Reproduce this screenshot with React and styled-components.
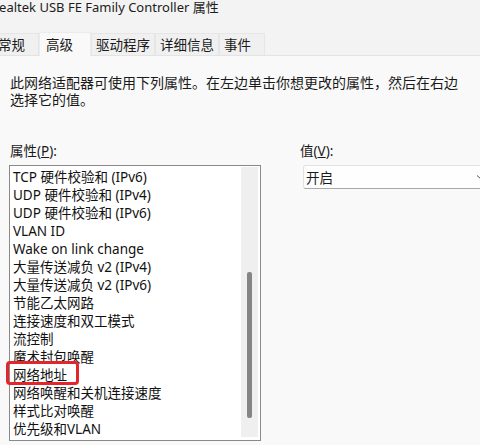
import React from "react";
import styled, { createGlobalStyle } from "styled-components";

const GlobalStyle = createGlobalStyle`
  html, body {
    margin: 0;
    padding: 0;
    background: #f9f9f9;
    overflow: hidden;
  }
  body {
    font-family: "Noto Sans", "Noto Sans CJK SC", sans-serif;
    font-size: 14px;
    color: #1a1a1a;
  }
`;

const properties = [
  "TCP 硬件校验和 (IPv6)",
  "UDP 硬件校验和 (IPv4)",
  "UDP 硬件校验和 (IPv6)",
  "VLAN ID",
  "Wake on link change",
  "大量传送减负 v2 (IPv4)",
  "大量传送减负 v2 (IPv6)",
  "节能乙太网路",
  "连接速度和双工模式",
  "流控制",
  "魔术封包唤醒",
  "网络地址",
  "网络唤醒和关机连接速度",
  "样式比对唤醒",
  "优先级和VLAN",
];

const tabs = ["常规", "高级", "驱动程序", "详细信息", "事件"];

const App = () => {
  return (
    <Wrapper>
      <GlobalStyle />
      <TitleBar>Realtek USB FE Family Controller 属性</TitleBar>
      <TabStrip>
        {tabs.map((t) => (
          <Tab key={t} $active={t === "高级"}>
            {t}
          </Tab>
        ))}
      </TabStrip>
      <Panel>
        <Description>
          此网络适配器可使用下列属性。在左边单击你想更改的属性，然后在右边
          <br />
          选择它的值。
        </Description>
        <Columns>
          <Column>
            <Label>
              属性(<u>P</u>):
            </Label>
            <ListBox>
              <Items>
                {properties.map((p) => (
                  <Item key={p} $marked={p === "网络地址"}>
                    {p}
                  </Item>
                ))}
              </Items>
              <Track>
                <Thumb />
              </Track>
            </ListBox>
          </Column>
          <Column $right>
            <Label>
              值(<u>V</u>):
            </Label>
            <Select>
              <span>开启</span>
              <svg width="10" height="10" viewBox="0 0 10 10">
                <path d="M1 3.5 L5 7 L9 3.5" fill="none" stroke="#555" strokeWidth="1" />
              </svg>
            </Select>
          </Column>
        </Columns>
      </Panel>
    </Wrapper>
  );
};

export default App;

const Wrapper = styled.div`
  width: 520px;
  margin-left: -10px;
`;

const TitleBar = styled.div`
  height: 18px;
  line-height: 15px;
  padding-left: 1px;
  font-size: 13px;
  background: #f3f3f3;
  white-space: nowrap;
  color: #1c1c1c;
`;

const TabStrip = styled.div`
  display: flex;
  align-items: flex-end;
  height: 37px;
  padding-left: 3px;
  background: #f3f3f3;
  border-bottom: 1px solid #e3e3e3;
`;

const Tab = styled.div`
  box-sizing: border-box;
  min-width: ${(p) => (p.$active ? "52px" : "46px")};
  height: ${(p) => (p.$active ? "24px" : "22px")};
  line-height: ${(p) => (p.$active ? "24px" : "22px")};
  padding: ${(p) => (p.$active ? "0 8px 0 6px" : "0 4px")};
  margin-bottom: ${(p) => (p.$active ? "-1px" : "0")};
  font-size: 13.5px;
  background: ${(p) => (p.$active ? "#f9f9f9" : "#f0f0f0")};
  border: 1px solid ${(p) => (p.$active ? "#ebebeb" : "#e6e6e6")};
  border-bottom: none;
  white-space: nowrap;
`;

const Panel = styled.div`
  padding: 19px 0 0 20px;
`;

const Description = styled.p`
  margin: 0;
  line-height: 16.5px;
  white-space: nowrap;
`;

const Columns = styled.div`
  display: flex;
  gap: 39px;
  margin-top: 34px;
`;

const Column = styled.div`
  display: flex;
  flex-direction: column;
  gap: 5px;
  ${(p) => (p.$right ? "flex: 1;" : "")}
`;

const Label = styled.div`
  line-height: 18px;
  font-size: 13.5px;
`;

const ListBox = styled.div`
  display: flex;
  width: 250px;
  height: 274px;
  margin-left: -1px;
  background: #ffffff;
  border: 1px solid #8a8a8a;
`;

const Items = styled.div`
  flex: 1;
  padding: 2px 0 0 3px;
`;

const Item = styled.div`
  position: relative;
  height: 18px;
  line-height: 18px;
  font-size: 13.5px;
  white-space: nowrap;
  color: #111;

  ${(p) =>
    p.$marked &&
    `
    &::after {
      content: "";
      position: absolute;
      left: -7px;
      top: -5px;
      width: 67px;
      height: 18px;
      border: 3px solid #e3262b;
      border-radius: 4px;
    }
  `}
`;

const Track = styled.div`
  display: flex;
  flex-direction: column;
  justify-content: flex-end;
  width: 17px;
  margin: 1px 2px 3px 0;
  padding-bottom: 19px;
  background: #efefef;
`;

const Thumb = styled.div`
  width: 5px;
  height: 146px;
  margin-left: 6px;
  background: #858585;
  border-radius: 2px;
`;

const Select = styled.div`
  display: flex;
  align-items: center;
  justify-content: space-between;
  width: 180px;
  height: 22px;
  margin-left: 3px;
  padding: 0 4px 0 2px;
  font-size: 13.5px;
  background: #fefefe;
  border: 1px solid #e2e2e2;
  border-bottom-color: #a8a8a8;
  border-radius: 3px;
`;
